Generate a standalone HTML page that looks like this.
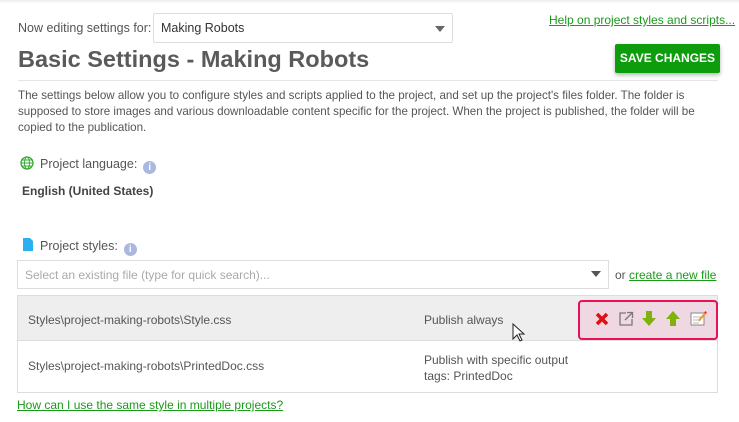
<!DOCTYPE html>
<html><head><style>
body{margin:0;width:739px;height:422px;background:#fff;font-family:"Liberation Sans",sans-serif;color:#555;font-size:12px;position:relative;overflow:hidden}
.a{position:absolute}
a{color:#1a9a1a;text-decoration:underline}
.i{display:inline-block;vertical-align:-2px;margin-left:6px;width:13px;height:13px;border-radius:50%;background:#aab8e0;color:#fff;font-size:10px;font-weight:bold;text-align:center;line-height:13px}
</style></head><body>
<div class="a" style="top:0;left:0;width:739px;height:4px;background:linear-gradient(#eee,#fff)"></div>
<div class="a" style="left:18px;top:21px;font-size:12.5px">Now editing settings for:</div>
<div class="a" style="left:153px;top:13px;width:298px;height:28px;border:1px solid #ddd;border-radius:2px"></div>
<div class="a" style="left:161px;top:21px;font-size:12.5px;color:#333">Making Robots</div>
<div class="a" style="left:435px;top:26px;width:0;height:0;border-left:5px solid transparent;border-right:5px solid transparent;border-top:6px solid #666"></div>
<a class="a" style="left:549px;top:13px;font-size:12px">Help on project styles and scripts...</a>
<div class="a" style="left:18px;top:46px;font-size:23.5px;font-weight:bold;color:#5a5a5a">Basic Settings - Making Robots</div>
<div class="a" style="left:615px;top:44px;width:105px;height:29px;background:#0c9c0c;color:#fff;font-weight:bold;font-size:12px;text-align:center;line-height:29px;border-radius:2px;box-shadow:0 2px 4px rgba(0,0,0,.3)">SAVE CHANGES</div>
<div class="a" style="left:18px;top:80px;width:700px;height:1px;background:#e5e5e5"></div>
<div class="a" style="left:18px;top:88px;width:710px;line-height:16px;font-size:11.6px">The settings below allow you to configure styles and scripts applied to the project, and set up the project's files folder. The folder is supposed to store images and various downloadable content specific for the project. When the project is published, the folder will be copied to the publication.</div>
<svg class="a" style="left:20px;top:156px" width="14" height="14" viewBox="0 0 14 14"><circle cx="7" cy="7" r="6" fill="none" stroke="#3a3" stroke-width="1.3"/><ellipse cx="7" cy="7" rx="2.5" ry="6" fill="none" stroke="#3a3"/><path d="M1 7h12M2 4h10M2 10h10" stroke="#3a3"/></svg>
<div class="a" style="left:40px;top:157px;font-size:12.5px">Project language:<span class="i">i</span></div>
<div class="a" style="left:22px;top:184px;font-weight:bold;font-size:12px;color:#444">English (United States)</div>
<svg class="a" style="left:23px;top:238px" width="10" height="13"><path d="M0 0h7l3 3v10H0z" fill="#2ab0f0"/></svg>
<div class="a" style="left:40px;top:239px;font-size:12.5px">Project styles:<span class="i">i</span></div>
<div class="a" style="left:17px;top:260px;width:590px;height:27px;border:1px solid #ddd"></div>
<div class="a" style="left:25px;top:268px;color:#aaa">Select an existing file (type for quick search)...</div>
<div class="a" style="left:591px;top:271px;border-left:5px solid transparent;border-right:5px solid transparent;border-top:6px solid #555"></div>
<div class="a" style="left:615px;top:268px">or <a>create a new file</a></div>
<div class="a" style="left:17px;top:295px;width:699px;height:96px;border:1px solid #ddd"></div>
<div class="a" style="left:18px;top:296px;width:699px;height:44px;background:#eee;border-bottom:1px solid #ddd"></div>
<div class="a" style="left:28px;top:313px">Styles\project-making-robots\Style.css</div>
<div class="a" style="left:424px;top:313px">Publish always</div>
<div class="a" style="left:28px;top:359px">Styles\project-making-robots\PrintedDoc.css</div>
<div class="a" style="left:424px;top:352px;line-height:16px">Publish with specific output<br>tags: PrintedDoc</div>
<svg class="a" style="left:512px;top:323px" width="14" height="20"><path d="M1 1v15l4-4 3 6 2-1-3-6h5z" fill="#fff" stroke="#222"/></svg>
<div class="a" style="left:578px;top:300px;width:136px;height:36px;background:#f0d8e2;border:2px solid #e4125a;border-radius:4px"></div>
<svg class="a" style="left:594px;top:311px" width="16" height="16"><path d="M3 3l10 10M13 3L3 13" stroke="#e01010" stroke-width="3.5"/></svg>
<svg class="a" style="left:618px;top:311px" width="16" height="16"><path d="M8 2H2v12h12V8" fill="none" stroke="#777" stroke-width="1.3"/><path d="M7 9l7-7M9 1.5h5.5V7" fill="none" stroke="#777" stroke-width="1.3"/></svg>
<svg class="a" style="left:641px;top:310px" width="16" height="17"><path d="M5 1h6v7h4l-7 8-7-8h4z" fill="#7fb20c"/></svg>
<svg class="a" style="left:665px;top:310px" width="16" height="17"><path d="M5 16h6V9h4L8 1 1 9h4z" fill="#7fb20c"/></svg>
<svg class="a" style="left:690px;top:310px" width="17" height="16"><rect x="1" y="3" width="13" height="12" fill="#fff" stroke="#888"/><path d="M3 7h8M3 10h8M3 13h6" stroke="#bbb"/><path d="M8 10l7-8 1.5 1.5-7 8z" fill="#f0a020"/><path d="M14 2.5l1.5-1.5 1.5 1.5-1.5 1.5z" fill="#e33"/></svg>
<a class="a" style="left:17px;top:398px">How can I use the same style in multiple projects?</a>
</body></html>
